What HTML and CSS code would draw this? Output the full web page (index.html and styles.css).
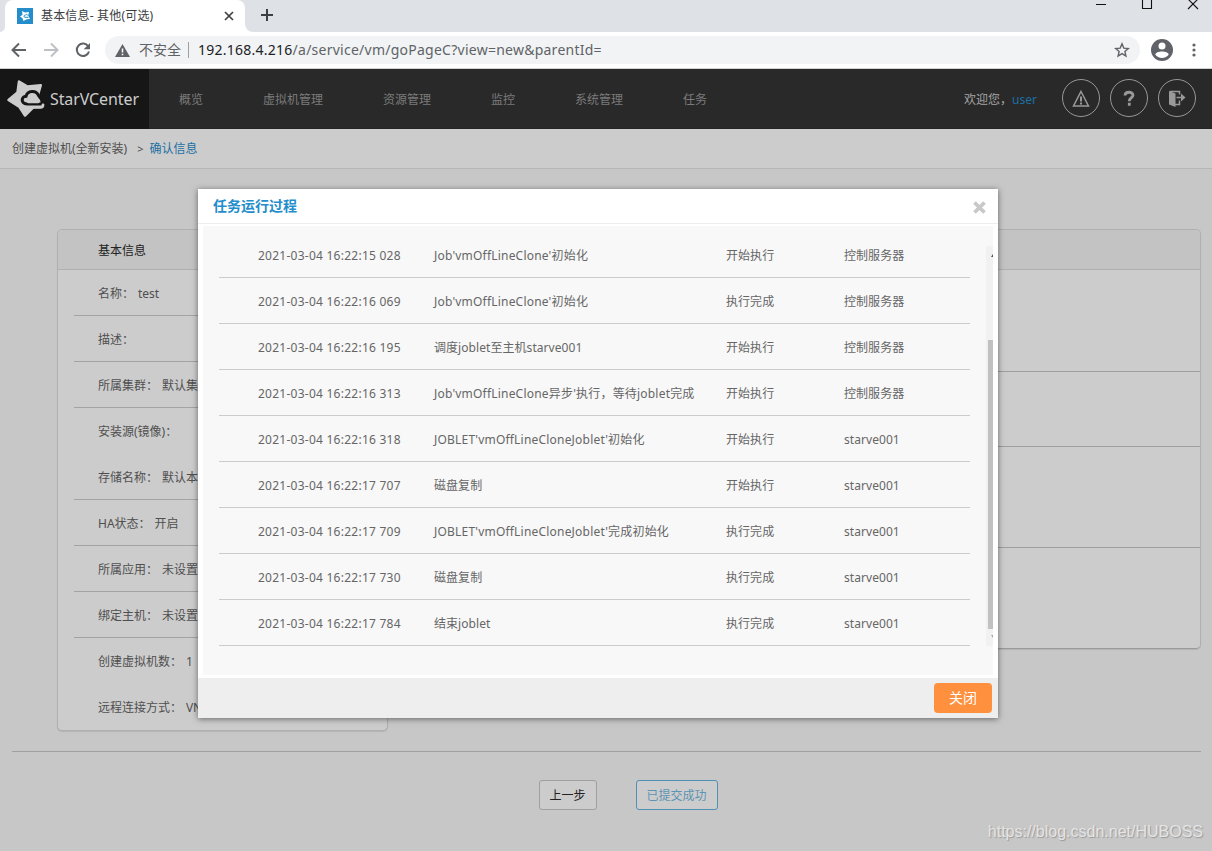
FILE: index.html
```html
<!DOCTYPE html>
<html lang="zh-CN">
<head>
<meta charset="utf-8">
<title>基本信息- 其他(可选)</title>
<link rel="stylesheet" href="styles.css">
</head>
<body>
<div class="tabs">
  <div class="tab-left"></div>
  <div class="tab">
    <svg class="favicon" width="16" height="16" viewBox="0 0 16 16"><rect width="16" height="16" fill="#248dcb"/><path d="M5 3 8 4.600 12 4 11.200 7.500 13 11 9.800 11.200 6.500 13 5.500 10.300 3 8.600 5.500 6.800Z" fill="#fff"/><path d="M11.500 9.300H8C6.300 9 6.800 7 8.200 7.200 9 6 10.500 6.300 10.800 7.500" stroke="#248dcb" stroke-width="1" fill="none"/></svg>
    <span class="tab-title">基本信息- 其他(可选)</span>
    <svg class="tab-x" width="10" height="10" viewBox="0 0 10 10"><path d="M1 1 9 9M9 1 1 9" stroke="#3c4043" stroke-width="1.7"/></svg>
  </div>
  <div class="tab-right">
    <svg width="14" height="14" viewBox="0 0 14 14"><path d="M7 1v12M1 7h12" stroke="#3c4043" stroke-width="2"/></svg>
  </div>
  <div class="win">
    <svg width="110" height="14" viewBox="0 0 110 14"><path d="M0 4.5h10M46.500 -2v10.500h9v-10.500M92-1l10 10M102-1l-10 10" stroke="#111" fill="none" stroke-width="1.100"/></svg>
  </div>
</div>
<div class="toolbar">
  <svg width="16" height="16" viewBox="0 0 16 16"><path d="M15 8H2M8 1.500 1.500 8 8 14.500" stroke="#5f6368" stroke-width="2" fill="none"/></svg>
  <svg width="16" height="16" viewBox="0 0 16 16"><path d="M1 8H14M8 1.500 14.500 8 8 14.500" stroke="#bdc1c6" stroke-width="2" fill="none"/></svg>
  <svg width="16" height="16" viewBox="0 0 16 16"><path d="M13.300 4.500A6.200 6.200 0 1 0 14 9.500" stroke="#5f6368" stroke-width="2" fill="none"/><path d="M15 1v6.300H8.700Z" fill="#5f6368"/></svg>
  <div class="omni">
    <svg width="15" height="13" viewBox="0 0 15 13"><path d="M7.500 0 15 13H0Z" fill="#5f6368"/><path d="M7.500 4.500v4M7.500 9.700v1.600" stroke="#fff" stroke-width="1.500"/></svg>
    <span class="unsafe">不安全</span>
    <span class="bar"></span>
    <span class="url"><b>192.168.4.216</b>/a/service/vm/goPageC?view=new&amp;parentId=</span>
    <svg class="fav" width="16" height="16" viewBox="0 0 16 16"><path d="M8 1.800 9.800 6.100 14.300 6.500 10.900 9.500 11.900 14 8 11.600 4.100 14 5.100 9.500 1.700 6.500 6.200 6.100Z" stroke="#5f6368" stroke-width="1.400" fill="none"/></svg>
  </div>
  <svg class="avatar" width="22" height="22" viewBox="0 0 22 22"><circle cx="11" cy="11" r="11" fill="#5f6368"/><circle cx="11" cy="7" r="3.500" fill="#fff"/><path d="M4.300 15.500C5 11.500 17 11.500 17.700 15.500 15 20 7 20 4.300 15.500Z" fill="#fff"/></svg>
  <svg class="dots" width="4" height="14" viewBox="0 0 4 14"><g fill="#5f6368"><circle cx="2" cy="2" r="1.600"/><circle cx="2" cy="7" r="1.600"/><circle cx="2" cy="12" r="1.600"/></g></svg>
</div>
<header class="header">
  <div class="brand">
    <svg width="40" height="40" viewBox="6 79 40 40"><path d="M19 81.500 27.500 86.500 40.800 85.200 38 95 40 107H33.500L25 115.500 19.500 107 8.500 100 17.500 92.500Z" fill="#ccc" stroke="#ccc" stroke-width="2.500" stroke-linejoin="round"/><path d="M42 104H27C20.500 103.500 21 96.500 26 96.300 27.500 90.500 36 89.800 38.500 95.500L41 99" fill="none" stroke="#161616" stroke-width="3"/><path d="M28.500 103.200C26.500 103.200 26.500 100 29.500 99.800 30.500 96 36 96 37 99.800 40 100 40 103.200 38.300 103.200Z" fill="#ccc"/><path d="M27 107.300H40.500Q43 107.300 43 104.800" fill="none" stroke="#ccc" stroke-width="2.800" stroke-linecap="round"/></svg>
    <span>StarVCenter</span>
  </div>
  <nav class="nav"><span>概览</span><span>虚拟机管理</span><span>资源管理</span><span>监控</span><span>系统管理</span><span>任务</span></nav>
  <div class="welcome">欢迎您，<span>user</span></div>
  <div class="rounds">
    <svg width="38" height="38" viewBox="0 0 38 38"><circle cx="19" cy="19" r="18.500" stroke="#989898" fill="none"/><path d="M19 12.500 26.500 27H11.500Z" stroke="#999" stroke-width="1.500" fill="none"/><path d="M19 17.500v5M19 23.500v2" stroke="#999" stroke-width="2"/></svg>
    <svg width="38" height="38" viewBox="0 0 38 38"><circle cx="19" cy="19" r="18.500" stroke="#989898" fill="none"/><path d="M15 16.500C15 12.200 23 12.200 23 16.300 23 18.700 19.300 18.700 19.300 22.300M19.300 23.800v3" stroke="#999" stroke-width="2.800" fill="none"/></svg>
    <svg width="38" height="38" viewBox="0 0 38 38"><circle cx="19" cy="19" r="18.500" stroke="#989898" fill="none"/><path d="M11 12 17.500 14.500V28L11 25.500Z" fill="#999"/><path d="M12 12.500H21.500V15.500M21.500 21.500V25.500H17M18.500 18.500H25" stroke="#999" stroke-width="1.500" fill="none"/><path d="M23 14.500 27.500 18.500 23 22.500Z" fill="#999"/></svg>
  </div>
</header>
<div class="crumbs"><span>创建虚拟机(全新安装)</span><span class="gt">&gt;</span><span class="here">确认信息</span></div>
<main class="page">
  <div class="panels">
    <section class="panel info">
      <h2>基本信息</h2>
      <ul>
        <li>名称： test</li>
        <li>描述：</li>
        <li>所属集群： 默认集群</li>
        <li class="open">安装源(镜像)：</li>
        <li>存储名称： 默认本地存储</li>
        <li>HA状态： 开启</li>
        <li>所属应用： 未设置</li>
        <li>绑定主机： 未设置</li>
        <li class="open">创建虚拟机数： 1</li>
        <li class="open">远程连接方式： VNC</li>
      </ul>
    </section>
    <section class="panel config">
      <h2></h2>
      <div class="c1"></div><div class="c2"></div><div class="c3"></div>
    </section>
  </div>
  <div class="actions"><button class="prev">上一步</button><button class="done">已提交成功</button></div>
</main>
<div class="watermark">https://blog.csdn.net/HUBOSS</div>
<div class="modal">
  <div class="modal-head"><h3>任务运行过程</h3>
    <svg width="13" height="13" viewBox="0 0 13 13"><path d="M1.500 1.500 11.500 11.500M11.500 1.500 1.500 11.500" stroke="#c8c8c8" stroke-width="3.800"/></svg>
  </div>
  <div class="modal-body">
    <div class="log">
      <div class="row"><span>2021-03-04 16:22:15 028</span><span class="wide">Job'vmOffLineClone'初始化</span><span>开始执行</span><span>控制服务器</span></div>
      <div class="row"><span>2021-03-04 16:22:16 069</span><span class="wide">Job'vmOffLineClone'初始化</span><span>执行完成</span><span>控制服务器</span></div>
      <div class="row"><span>2021-03-04 16:22:16 195</span><span>调度joblet至主机starve001</span><span>开始执行</span><span>控制服务器</span></div>
      <div class="row"><span>2021-03-04 16:22:16 313</span><span class="wide">Job'vmOffLineClone异步'执行，等待joblet完成</span><span>开始执行</span><span>控制服务器</span></div>
      <div class="row"><span>2021-03-04 16:22:16 318</span><span class="wide">JOBLET'vmOffLineCloneJoblet'初始化</span><span>开始执行</span><span>starve001</span></div>
      <div class="row"><span>2021-03-04 16:22:17 707</span><span>磁盘复制</span><span>开始执行</span><span>starve001</span></div>
      <div class="row"><span>2021-03-04 16:22:17 709</span><span class="wide">JOBLET'vmOffLineCloneJoblet'完成初始化</span><span>执行完成</span><span>starve001</span></div>
      <div class="row"><span>2021-03-04 16:22:17 730</span><span>磁盘复制</span><span>执行完成</span><span>starve001</span></div>
      <div class="row"><span>2021-03-04 16:22:17 784</span><span>结束joblet</span><span>执行完成</span><span>starve001</span></div>
    </div>
    <div class="scroll">
      <svg width="7" height="94" viewBox="0 0 7 94"><path d="M7 8v3H5Z" fill="#505050"/></svg>
      <div class="thumb"></div>
      <svg width="7" height="17" viewBox="0 0 7 17"><path d="M7 9V6H5Z" fill="#a3a3a3"/></svg>
    </div>
  </div>
  <div class="modal-foot"><button>关闭</button></div>
</div>
</body>
</html>
```
FILE: styles.css
```css
* { box-sizing: border-box; }
body {
  margin: 0; width: 1212px; height: 851px; overflow: hidden; position: relative;
  background: #c7c7c7; color: #4f4f4f;
  font: 12px/18px "Noto Sans", "Noto Sans CJK SC", sans-serif;
}
svg { display: block; flex: none; }
span, li { white-space: nowrap; }
button { font: inherit; padding: 0; }

.tabs { height: 32px; background: #dee1e6; display: flex; }
.tab-left { width: 5px; background: #fff; }
.tab-left::before { content: ""; display: block; height: 32px; background: #dee1e6; border-bottom-right-radius: 6px; }
.tab { width: 240px; background: #fff; border-radius: 8px 8px 0 0; display: flex; align-items: center; padding: 0 12px; }
.tab-title { margin-left: 8px; flex: 1; color: #3c4043; letter-spacing: .18px; }
.tab-x { margin-right: -1px; }
.tab-right { position: relative; width: 100px; background: linear-gradient(#fff, #fff) left bottom / 8px 8px no-repeat; }
.tab-right svg { margin: 8px 0 0 15px; }
.tab-right::before { content: ""; position: absolute; left: 0; bottom: 0; width: 8px; height: 8px; background: #dee1e6; border-bottom-left-radius: 8px; }
.win { margin-left: auto; padding-right: 6px; }

.toolbar { height: 37px; background: #fff; border-bottom: 1px solid #cfd1d5; display: flex; align-items: center; padding: 0 16px 0 11px; gap: 16px; }
.omni { flex: 1; height: 28px; border-radius: 14px; background: #f1f3f4; display: flex; align-items: center; margin-left: -2px; padding: 0 10px; }
.unsafe { margin-left: 9px; font-size: 14px; color: #5f6368; }
.bar { width: 1px; height: 16px; background: #9aa0a6; margin: 0 9px 0 7px; }
.url { font-size: 14px; color: #5f6368; flex: 1; letter-spacing: .25px; }
.url b { font-weight: 400; color: #202124; }
.avatar { margin-left: -5px; }
.dots { margin-left: 3px; }

.header { height: 60px; background: #292929; display: flex; align-items: center; padding-right: 16px; border-bottom: 1px solid #242424; }
.brand { width: 149px; height: 60px; background: #161616; color: #ccc; display: flex; align-items: center; padding-left: 6px; }
.brand span { font-size: 16px; margin-left: 4px; letter-spacing: -.1px; }
.nav { display: flex; gap: 60px; padding: 2px 0 0 30px; color: #7b7b7b; flex: 1; }
.welcome { color: #a5a5a5; margin-right: 25px; padding-top: 2px; }
.welcome span { color: #1c6fa3; }
.rounds { display: flex; gap: 10px; margin-top: -2px; }

.crumbs { height: 40px; background: #ccc; border-bottom: 1px solid #b7b7b7; padding-left: 12px; display: flex; align-items: center; }
.gt { margin: 0 6px 0 10px; font-size: 11px; }
.here { color: #1c70a3; }

.page { padding: 60px 11px 0 12px; }
.panels { display: flex; align-items: flex-start; justify-content: space-between; padding-left: 45px; height: 523px; border-bottom: 1px solid #a0a0a0; }
.panel { border: 1px solid #b0b0b0; border-radius: 5px; background: #ccc; box-shadow: 0 1px 1px rgba(0,0,0,.1); }
.panel h2 { height: 40px; margin: 0; background: #c3c3c3; border-bottom: 1px solid #b0b0b0; font-size: 12px; font-weight: 400; line-height: 42px; padding-left: 40px; color: #222; border-radius: 4px 4px 0 0; }
.info { width: 331px; height: 502px; }
.info ul { list-style: none; margin: 0; padding: 0 16px; }
.info li { height: 46px; line-height: 48px; padding-left: 24px; border-bottom: 1px solid #a3a3a3; word-spacing: .8px; }
.info li.open { border-bottom-color: transparent; }
.config { width: 789px; height: 420px; border-bottom-color: #9a9a9a; }
.c1, .c2, .c3 { border-bottom: 1px solid #9f9f9f; }
.c1 { height: 102px; }
.c2 { height: 75px; }
.c3 { height: 101px; }
.actions { display: flex; justify-content: center; gap: 39px; padding-top: 28px; padding-left: 43px; }
.actions button { height: 30px; border-radius: 3px; background: #ccc; padding-top: 2px; }
.actions .prev { width: 58px; border: 1px solid #a0a0a0; color: #222; }
.actions .done { width: 82px; border: 1px solid #4f90b5; color: #5e94b3; }
.watermark { position: absolute; right: 9px; top: 822px; font: 16px/20px "Liberation Sans", sans-serif; color: #e4e4e4; text-shadow: 1px 1px 1px #999; }

.modal { position: absolute; left: 198px; top: 189px; width: 800px; height: 529px; background: #fff; box-shadow: 0 1px 6px rgba(0,0,0,.5); color: #666; }
.modal-head { height: 35px; border-bottom: 1px solid #ededed; display: flex; justify-content: space-between; padding: 12px 12px 0 15px; }
.modal-head h3 { margin: -5px 0 0; font-size: 14px; line-height: 20px; color: #248dcb; }
.modal-body { margin: 2px 5px 3px; height: 449px; background: #f8f8f8; display: flex; justify-content: space-between; }
.log { padding: 6px 0 0 16px; }
.row { width: 751px; height: 46px; line-height: 48px; border-bottom: 1px solid #ccc; padding-left: 39px; display: grid; grid-template-columns: 176px 292px 118px 1fr; }
.row span { letter-spacing: .06px; }
.row span:first-child { letter-spacing: .25px; }
.row .wide { letter-spacing: .2px; }
.scroll { width: 7px; height: 400px; margin-top: 20px; background: #f1f1f1; }
.thumb { height: 289px; margin-left: 2px; background: #c1c1c1; }
.modal-foot { height: 40px; background: #eee; display: flex; justify-content: flex-end; padding: 5px 6px; }
.modal-foot button { width: 58px; height: 30px; border: 0; border-radius: 4px; background: #ff903d; color: #fff; font-size: 14px; }
```
